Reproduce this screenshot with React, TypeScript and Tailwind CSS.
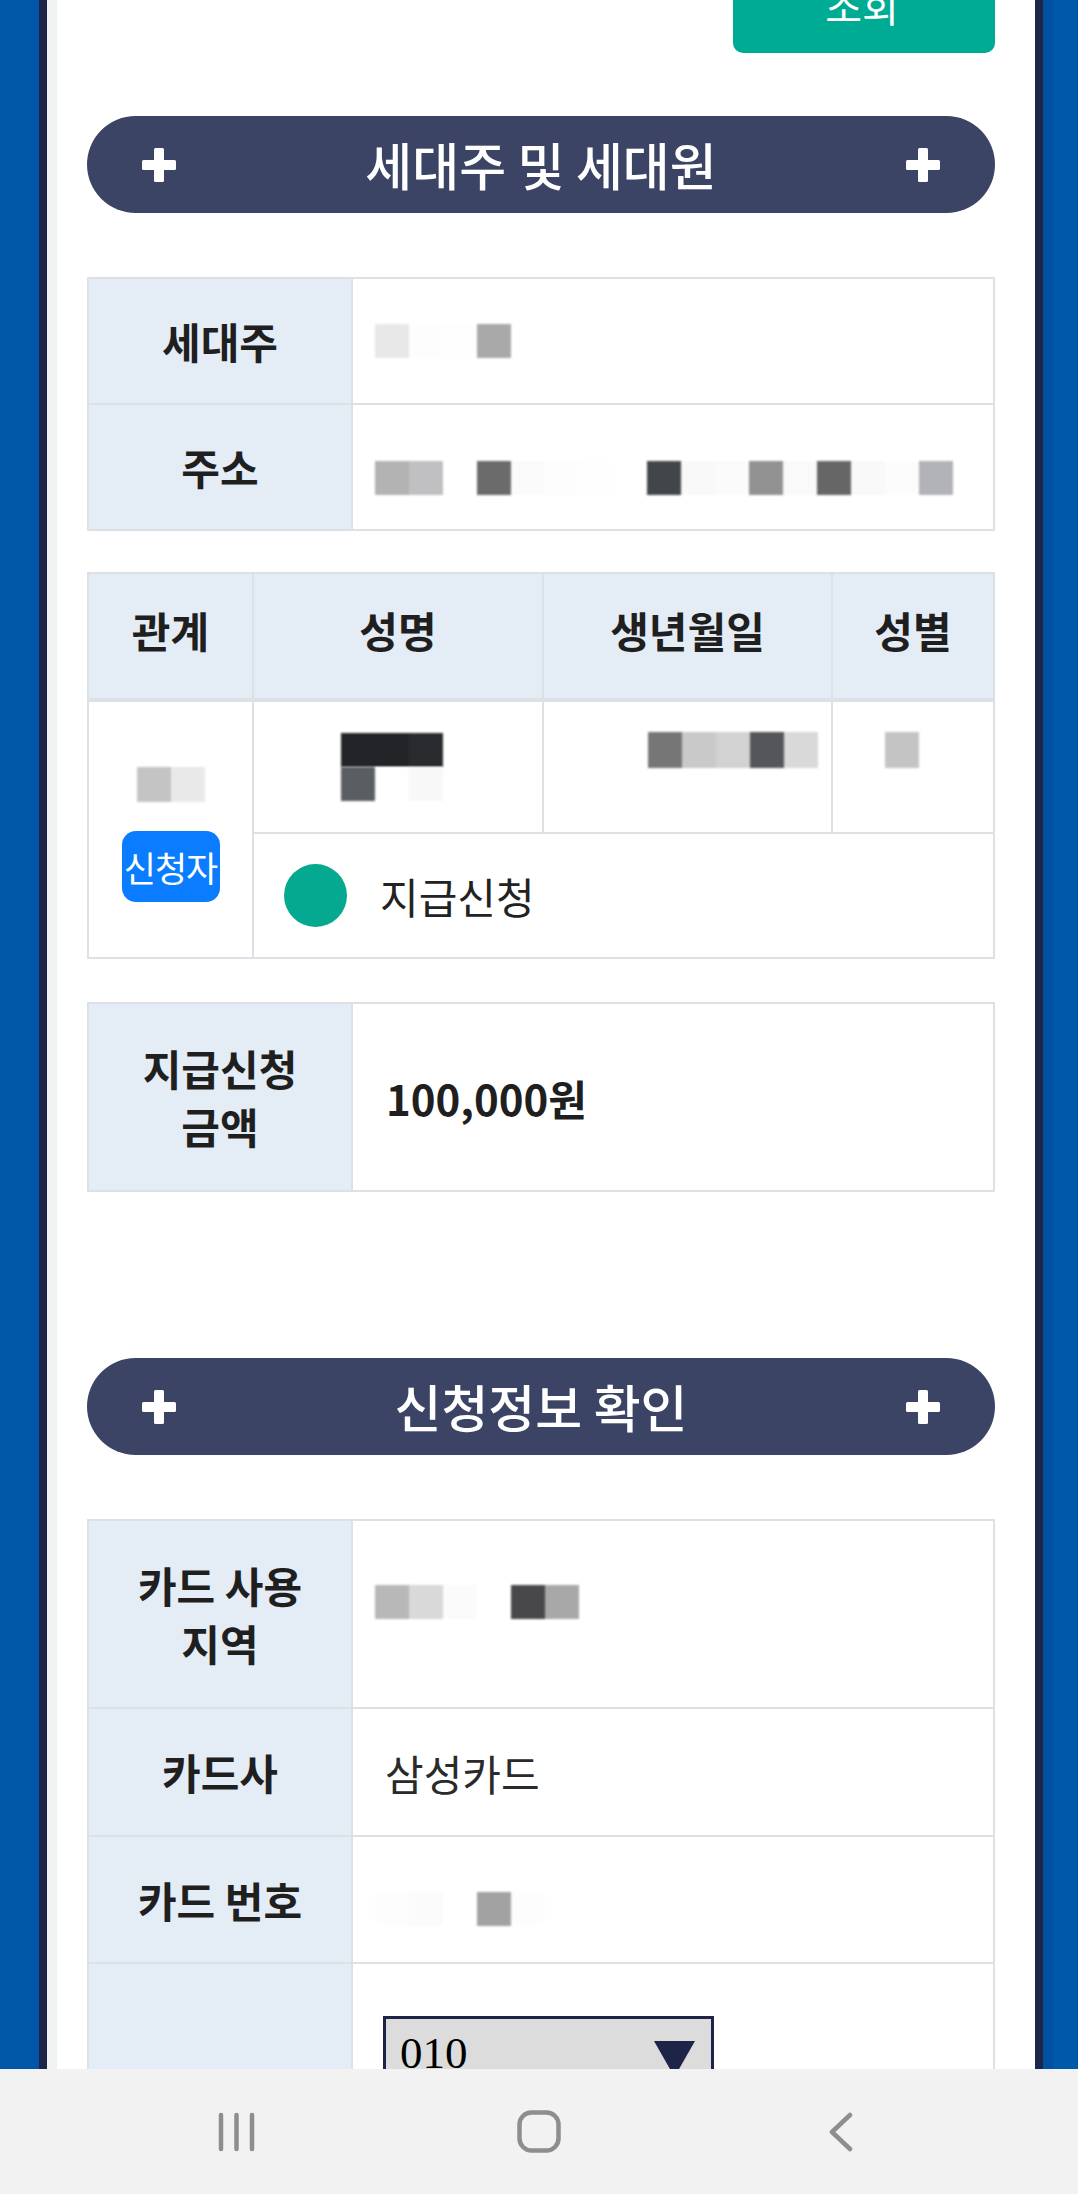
import React from "react";

const KR = "font-['Noto_Sans_CJK_KR','Noto_Sans',sans-serif]";

function Plus() {
  return (
    <svg width="34" height="34" viewBox="0 0 34 34" className="shrink-0">
      <rect x="12" y="0" width="10" height="34" rx="1.5" fill="white" />
      <rect x="0" y="12" width="34" height="10" rx="1.5" fill="white" />
    </svg>
  );
}

function SectionBar({ title }: { title: string }) {
  return (
    <div className="flex h-[97px] items-center justify-between rounded-full bg-[#3b4464] px-[55px]">
      <Plus />
      <h2 className="whitespace-nowrap text-[51px] font-medium leading-none text-white">{title}</h2>
      <Plus />
    </div>
  );
}

// pixelated / blurred redaction cells, 34px each
function Redacted({ cells, h = 34 }: { cells: string[]; h?: number }) {
  return (
    <div className="flex blur-[0.8px]">
      {cells.map((c, i) => (
        <div key={i} className="w-[34px]" style={{ height: h, backgroundColor: c }} />
      ))}
    </div>
  );
}

function Label({ children }: { children?: React.ReactNode }) {
  return (
    <div className="flex items-center justify-center bg-[#e4ecf6] text-center text-[42px] font-bold leading-[58px] text-[#1f1f1f]">
      {children}
    </div>
  );
}

function Value({ children, className = "" }: { children?: React.ReactNode; className?: string }) {
  return <div className={`flex items-center whitespace-nowrap bg-white pl-[22px] ${className}`}>{children}</div>;
}

export default function App() {
  return (
    <div className={`flex h-[2194px] w-[1078px] flex-col overflow-hidden bg-[#0057a8] ${KR}`}>
      <div className="flex min-h-0 flex-1">
        <div className="w-[39px] bg-[#0057a8]" />
        <div className="w-[8px] bg-[#1d2548]" />
        <div className="w-[10px] bg-[#f1f2f4]" />

        <main className="w-[978px] shrink-0 overflow-hidden bg-white pl-[30px] pr-[40px]">
          <div className="flex justify-end">
            <button className="-mt-[43px] flex h-[96px] w-[262px] items-center justify-center rounded-[10px] bg-[#00ab93] pr-[4px] text-[40px] leading-none text-white">
              조회
            </button>
          </div>

          <div className="mt-[63px]">
            <SectionBar title="세대주 및 세대원" />
          </div>

          {/* household head */}
          <div className="mt-[64px] grid grid-cols-[262px_1fr] grid-rows-[124px_124px] gap-[2px] bg-[#dde1e5] p-[2px]">
            <Label>세대주</Label>
            <Value>
              <Redacted cells={["#e8e8e8", "#fdfdfd", "#fefefe", "#a9a9aa"]} />
            </Value>
            <Label>주소</Label>
            <Value className="pt-[22px]">
              <Redacted
                cells={[
                  "#b3b3b3", "#c0c0c2", "#ffffff", "#6b6b6b", "#fbfbfb", "#fdfdfd", "#fefefe", "#ffffff", "#434649",
                  "#f9f9f9", "#fbfbfb", "#929292", "#fafafa", "#666666", "#f9f9f9", "#fcfcfc", "#b2b3b6",
                ]}
              />
            </Value>
          </div>

          {/* members */}
          <div className="mt-[41px] grid grid-cols-[163px_288px_287px_1fr] grid-rows-[126px_130px_123px] gap-[2px] bg-[#dde1e5] p-[2px] text-[42px] text-[#222]">
            {["관계", "성명", "생년월일", "성별"].map((h) => (
              <div
                key={h}
                className="flex items-center justify-center whitespace-nowrap border-b-2 border-[#dde1e5] bg-[#e4ecf6] pb-[14px] font-bold text-[#1f1f1f]"
              >
                {h}
              </div>
            ))}

            <div className="row-span-2 flex flex-col items-center justify-center gap-[29px] bg-white pt-[10px]">
              <Redacted cells={["#c4c4c4", "#e9e9e9"]} h={35} />
              <span className="flex h-[71px] w-[98px] items-center justify-center whitespace-nowrap rounded-[14px] bg-[#0a7cff] text-[35px] leading-none tracking-[-1px] text-white">
                신청자
              </span>
            </div>
            <div className="flex items-center justify-center bg-white pr-[12px]">
              <div className="flex flex-col">
                <Redacted cells={["#222428", "#222428", "#2a2b2e"]} />
                <Redacted cells={["#5a5d61", "#ffffff", "#f8f8f8"]} />
              </div>
            </div>
            <div className="bg-white pl-[104px] pt-[30px]">
              <Redacted cells={["#767676", "#c9c9c9", "#d2d2d2", "#555659", "#d9d9d9"]} h={36} />
            </div>
            <div className="bg-white pl-[52px] pt-[30px]">
              <Redacted cells={["#c4c4c4"]} h={36} />
            </div>

            <div className="col-span-3 flex items-center gap-[33px] bg-white pl-[30px]">
              <span className="h-[63px] w-[63px] rounded-full bg-[#04a98f]" />
              <span className="leading-none">지급신청</span>
            </div>
          </div>

          {/* amount */}
          <div className="mt-[43px] grid grid-cols-[262px_1fr] grid-rows-[186px] gap-[2px] bg-[#dde1e5] p-[2px]">
            <Label>
              지급신청
              <br />
              금액
            </Label>
            <Value className="pl-[33px] text-[42px] font-bold text-[#1f1f1f]">100,000원</Value>
          </div>

          <div className="mt-[166px]">
            <SectionBar title="신청정보 확인" />
          </div>

          {/* application info */}
          <div className="mt-[64px] grid grid-cols-[262px_1fr] grid-rows-[186px_126px_125px_180px] gap-[2px] bg-[#dde1e5] p-[2px]">
            <Label>
              카드 사용
              <br />
              지역
            </Label>
            <Value className="pb-[24px]">
              <Redacted cells={["#b8b8b8", "#d9d9d9", "#fbfbfb", "#ffffff", "#48484b", "#a8a8a8"]} />
            </Value>
            <Label>카드사</Label>
            <Value className="pl-[32px] text-[42px] text-[#2a2a2a]">삼성카드</Value>
            <Label>카드 번호</Label>
            <Value className="pt-[18px]">
              <Redacted cells={["#fdfdfd", "#fbfbfb", "#ffffff", "#a2a2a2", "#fdfdfd"]} />
            </Value>
            <Label />
            <div className="bg-white pl-[30px] pt-[52px]">
              <div className="flex h-[84px] w-[331px] items-start justify-between border-[3px] border-[#1d2447] bg-[#dcdcdc] pl-[14px] pr-[16px] pt-[12px]">
                <span className="font-['Liberation_Serif',serif] text-[45px] leading-none text-black">010</span>
                <svg width="41" height="36" viewBox="0 0 41 36" className="mt-[10px]">
                  <polygon points="0,0 41,0 20.5,36" fill="#1d2447" />
                </svg>
              </div>
            </div>
          </div>
        </main>

        <div className="w-[8px] bg-[#1d2548]" />
        <div className="w-[10px] bg-[#0051a0]" />
        <div className="flex-1 bg-[#0058ab]" />
      </div>

      {/* android navigation bar */}
      <nav className="flex h-[125px] items-center justify-center bg-[#f2f2f2]">
        <div className="flex w-[302px] justify-center">
          <svg width="38" height="40" viewBox="0 0 38 40">
            <g stroke="#8e8e8e" strokeWidth="4.5" strokeLinecap="round">
              <line x1="3" y1="3" x2="3" y2="37" />
              <line x1="18.5" y1="3" x2="18.5" y2="37" />
              <line x1="34" y1="3" x2="34" y2="37" />
            </g>
          </svg>
        </div>
        <div className="flex w-[302px] justify-center">
          <svg width="44" height="43" viewBox="0 0 44 43">
            <rect x="2.5" y="2.5" width="39" height="38" rx="12" fill="none" stroke="#8e8e8e" strokeWidth="4.5" />
          </svg>
        </div>
        <div className="flex w-[302px] justify-center">
          <svg width="26" height="40" viewBox="0 0 26 40">
            <polyline points="22,3 4,20 22,37" fill="none" stroke="#8e8e8e" strokeWidth="4.5" strokeLinecap="round" strokeLinejoin="round" />
          </svg>
        </div>
      </nav>
    </div>
  );
}
